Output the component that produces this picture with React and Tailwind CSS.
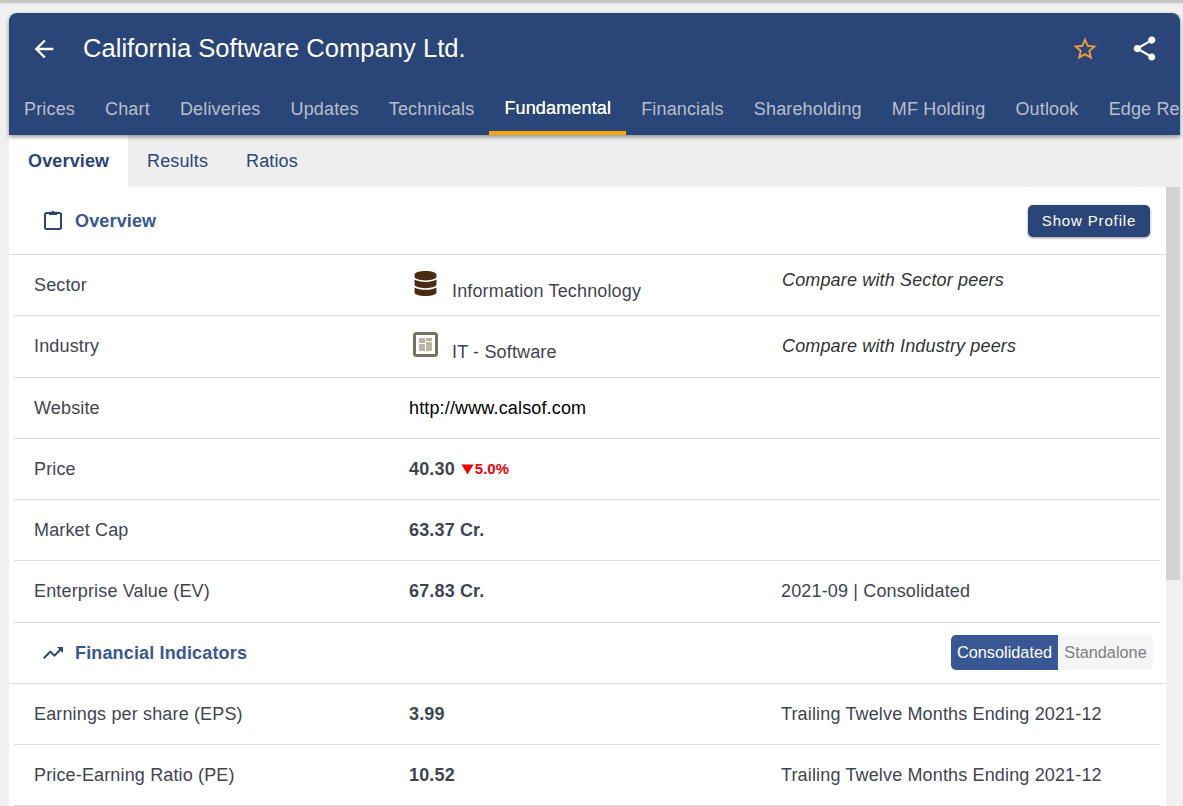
import React from 'react';
import { MdArrowBack, MdStarBorder, MdShare, MdTrendingUp } from 'react-icons/md';
import { FaDatabase } from 'react-icons/fa';

const TABS = ['Prices', 'Chart', 'Deliveries', 'Updates', 'Technicals', 'Fundamental', 'Financials', 'Shareholding', 'MF Holding', 'Outlook', 'Edge Report'];
const SUB_TABS = ['Overview', 'Results', 'Ratios'];

// icono de industria
function IndustryIcon() {
  return (
    <svg width="25" height="25" viewBox="0 0 25 25" className="shrink-0">
      <rect x="1.5" y="1.5" width="22" height="22" rx="2" fill="#fff" stroke="#77725f" strokeWidth="3" />
      <rect x="6" y="6" width="6" height="5" fill="#b8b5a3" />
      <rect x="13" y="6" width="6" height="3" fill="#b8b5a3" />
      <rect x="6" y="12" width="6" height="7" fill="#b8b5a3" />
      <rect x="13" y="10" width="6" height="9" fill="#b8b5a3" />
    </svg>
  );
}

function ClipboardIcon() {
  return (
    <svg width="18" height="20" viewBox="0 0 18 20" fill="none" className="shrink-0 -mt-[2px]">
      <path d="M5 3H2.5A1.5 1.5 0 0 0 1 4.5v13A1.5 1.5 0 0 0 2.5 19h13a1.5 1.5 0 0 0 1.5-1.5v-13A1.5 1.5 0 0 0 15.5 3H13" stroke="#2a4578" strokeWidth="2" />
      <path d="M5 1.8h2.6a1.5 1.5 0 0 1 2.8 0H13V5H5z" fill="#2a4578" />
    </svg>
  );
}

function Row({ label, value, note, h = 'h-[61px]' }) {
  return (
    <div className={`${h} ml-[5px] mr-[6px] grid grid-cols-[375px_372px_1fr] items-center border-b border-[#dcdcdc] pl-5 text-[18px] tracking-[0.15px] text-[#3f4550]`}>
      <div>{label}</div>
      <div>{value}</div>
      <div>{note}</div>
    </div>
  );
}

function IconValue({ icon, text }) {
  return (
    <div className="flex items-start pl-1 mt-[3px]">
      <div className="w-[39px] h-[25px] flex items-start">{icon}</div>
      <span className="mt-[8px] leading-[24px]">{text}</span>
    </div>
  );
}

function Note({ text }) {
  return <div className="italic text-[#333] -mt-[10px] pl-px">{text}</div>;
}

function App() {
  return (
    <div className="h-[806px] w-full overflow-hidden bg-[#f0f0f0] font-['Liberation_Sans','Roboto',sans-serif] flex flex-col">
      <div className="h-[2px] shrink-0 bg-[#c4c4c4] shadow-[0_1px_2px_rgba(0,0,0,0.2)]" />

      <div className="flex-1 min-h-0 flex flex-col pt-[11px] pl-[9px] pr-[3px]">
        {/* barra superior */}
        <div className="relative z-10 shrink-0 h-[122px] bg-[#2a4578] rounded-t-[8px] shadow-[0_2px_4px_rgba(0,0,0,0.4)] flex flex-col overflow-hidden">
          <div className="h-[71px] flex items-center pl-[21px] pr-[21px] text-white">
            <MdArrowBack size={28} />
            <div className="ml-[25px] text-[25.6px] leading-none">California Software Company Ltd.</div>
            <div className="ml-auto flex items-center gap-[31px]">
              <MdStarBorder size={28} className="text-[#ee9d3e]" />
              <MdShare size={29} />
            </div>
          </div>
          <div className="h-[51px] flex whitespace-nowrap">
            {TABS.map((t) => (
              <div
                key={t}
                className={`h-full shrink-0 px-[15.05px] flex items-center text-[18px] tracking-[0.15px] ${t === 'Fundamental' ? 'text-white pt-[2px] [text-shadow:0_0_0.6px_white] border-b-[4px] border-[#f7a70b]' : 'text-[#b9bfca]'}`}
              >
                {t}
              </div>
            ))}
          </div>
        </div>

        {/* sub pestañas */}
        <div className="shrink-0 h-[52px] bg-[#eeeeee] flex text-[18px] tracking-[0.15px] text-[#2a4578]">
          {SUB_TABS.map((t, i) => (
            <div
              key={t}
              className={`h-full flex items-center ${i === 0 ? 'w-[119px] pl-[19px] bg-white font-bold' : i === 1 ? 'pl-[19px] w-[118px]' : 'pl-0'}`}
            >
              {t}
            </div>
          ))}
        </div>

        <div className="flex-1 min-h-0 flex">
          <div className="w-[1157px] bg-white flex flex-col">
            {/* cabecera Overview */}
            <div className="shrink-0 h-[68px] border-b border-[#dcdcdc] flex items-center pl-[35px] pr-[16px]">
              <ClipboardIcon />
              <div className="ml-[13px] mt-[2px] text-[18px] tracking-[0.15px] font-bold text-[#3a5795]">Overview</div>
              <button className="ml-auto h-[32px] w-[122px] pt-[2px] rounded-[5px] bg-[#2a4578] text-white text-[15px] tracking-[0.85px] shadow-[0_1px_3px_rgba(0,0,0,0.4)]">
                Show Profile
              </button>
            </div>

            <Row
              label="Sector"
              value={<IconValue icon={<FaDatabase size={25} className="text-[#4b2a14]" />} text="Information Technology" />}
              note={<Note text="Compare with Sector peers" />}
            />
            <Row
              label="Industry"
              h="h-[62px]"
              value={<IconValue icon={<IndustryIcon />} text="IT - Software" />}
              note={<div className="italic text-[#333] pl-px">Compare with Industry peers</div>}
            />
            <Row label="Website" value={<span className="text-black">http://www.calsof.com</span>} />
            <Row
              label="Price"
              value={
                <div className="flex items-center font-bold">
                  <span>40.30</span>
                  <span className="ml-[6px] mt-[1px] flex items-center text-[15px] tracking-normal text-[#f00000]">
                    <svg width="13" height="11" viewBox="0 0 13 11" className="mr-px">
                      <path d="M0.5 0.5h12L6.5 10.5z" fill="#f00000" />
                    </svg>
                    5.0%
                  </span>
                </div>
              }
            />
            <Row label="Market Cap" value={<span className="font-bold">63.37 Cr.</span>} />
            <Row label="Enterprise Value (EV)" h="h-[62px]" value={<span className="font-bold">67.83 Cr.</span>} note="2021-09 | Consolidated" />

            {/* cabecera indicadores */}
            <div className="shrink-0 h-[61px] border-b border-[#dcdcdc] flex items-center pl-[32px] pr-[13px] text-[#2a4578]">
              <MdTrendingUp size={24} />
              <div className="ml-[10px] text-[18px] tracking-[0.15px] font-bold text-[#3a5795]">Financial Indicators</div>
              <div className="ml-auto -mt-[2px] h-[35px] flex rounded-[5px] overflow-hidden text-[16.3px] leading-none">
                <div className="w-[107px] flex items-center justify-center bg-[#3a5795] text-white">Consolidated</div>
                <div className="w-[95px] flex items-center justify-center bg-[#f5f5f5] text-[#7d7d7d]">Standalone</div>
              </div>
            </div>

            <Row label="Earnings per share (EPS)" value={<span className="font-bold">3.99</span>} note="Trailing Twelve Months Ending 2021-12" />
            <Row label="Price-Earning Ratio (PE)" value={<span className="font-bold">10.52</span>} note="Trailing Twelve Months Ending 2021-12" />
          </div>

          {/* barra de scroll */}
          <div className="w-[14px] bg-[#f1f1f1]">
            <div className="h-[393px] bg-[#d3d3d3]" />
          </div>
        </div>
      </div>
    </div>
  );
}

export default App;
